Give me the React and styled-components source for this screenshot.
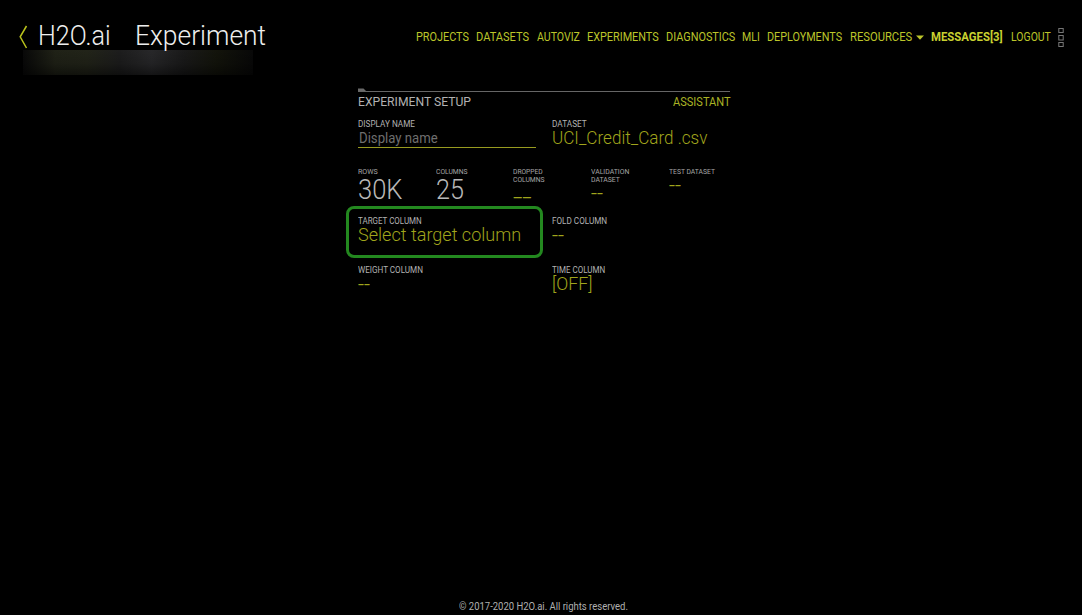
import React, { useLayoutEffect, useRef, useState } from "react";
import styled, { createGlobalStyle } from "styled-components";

const Global = createGlobalStyle`
  * { box-sizing: border-box; }
  body { margin: 0; background: #000; overflow: hidden; font-family: Roboto, "Liberation Sans", sans-serif; }
`;

const TextBox = styled.span`
  display: block;
  flex: none;
  width: ${(p) => p.$w}px;
  height: ${(p) => p.$lh}px;
  line-height: ${(p) => p.$lh}px;
  font-size: ${(p) => p.$size}px;
  font-weight: ${(p) => p.$weight || 400};
  color: ${(p) => p.$color};
  white-space: pre;
`;
const Stretch = styled.span`
  display: inline-block;
  vertical-align: top;
  transform-origin: 0 50%;
`;

/* Text condensed or widened horizontally to fill a given width. */
function Text({ w, lh, size, weight, color, children }) {
  const ref = useRef(null);
  const [scale, setScale] = useState(1);
  useLayoutEffect(() => {
    setScale(w / ref.current.offsetWidth);
  }, [w, children]);
  return (
    <TextBox $w={w} $lh={lh} $size={size} $weight={weight} $color={color}>
      <Stretch ref={ref} style={{ transform: `scaleX(${scale})` }}>{children}</Stretch>
    </TextBox>
  );
}

const Page = styled.div`
  display: flex;
  flex-direction: column;
  width: 1082px;
  height: 615px;
  background: #000;
`;
const Header = styled.header`
  display: flex;
  justify-content: space-between;
  height: 90px;
  padding: 21px 18px 0 19px;
`;
const Brand = styled.div`
  display: flex;
  flex-direction: column;
`;
const Title = styled.div`
  display: flex;
  height: 29px;
`;
const TitleText = styled.div`
  display: flex;
  gap: 24px;
  padding-top: 1px;
`;
const BackIcon = styled.svg`
  width: 9px;
  height: 24px;
  margin: 4px 10px 0 0;
`;
const UserBlur = styled.div`
  width: 230px;
  height: 25px;
  margin: 0 0 0 4px;
  background:
    linear-gradient(180deg, rgba(0, 0, 0, 0), rgba(0, 0, 0, 0.15) 55%, rgba(0, 0, 0, 0.5)),
    linear-gradient(90deg, #080808 0, #202217 14%, #222419 28%, #1d1d1d 42%, #28282a 56%, #1a1a1a 70%, #13140b 84%, #080808 100%);
`;
const Nav = styled.nav`
  display: flex;
  align-items: flex-start;
  padding-top: 6px;
  gap: 7.3px;
`;
const Resources = styled.div`
  display: flex;
  gap: 4px;
`;
const Caret = styled.svg`
  width: 8px;
  height: 5px;
  margin-top: 8px;
`;
const Dots = styled.svg`
  width: 6px;
  height: 20px;
`;
const Setup = styled.main`
  flex: 1;
  width: 373px;
  margin-left: 358px;
  margin-top: -2px;
`;
const Rule = styled.svg`
  display: block;
  width: 372px;
  height: 4px;
`;
const SetupHead = styled.div`
  display: flex;
  justify-content: space-between;
  width: 372px;
  height: 27px;
  padding-top: 2px;
`;
const Columns = styled.div`
  display: grid;
  grid-template-columns: 194px 179px;
  height: ${(p) => p.$h}px;
`;
const Field = styled.div`
  display: flex;
  flex-direction: column;
`;
const Input = styled.div`
  width: 178px;
  height: 19px;
  padding-left: 1px;
  border-bottom: 1px solid #989b20;
`;
const Stats = styled.div`
  display: grid;
  grid-template-columns: repeat(4, 77.7px) 62px;
  height: 38px;
`;
const Target = styled.div`
  width: 197px;
  height: 52px;
  margin: 0 0 0 -12px;
  padding: 7px 0 0 9px;
  border: 3px solid #23881f;
  border-radius: 8px;
`;
const FoldField = styled(Field)`
  padding-top: 10px;
`;
const Footer = styled.footer`
  display: flex;
  justify-content: center;
  height: 17px;
  padding-left: 5px;
`;

const LIME = "#bcc52a";
const OLIVE = "#a0a51c";
const GREY = "#b2b2b2";

const NavLink = ({ w, bold, children }) => (
  <Text w={w} lh={20} size={12.3} weight={bold ? 700 : 400} color={bold ? "#c8d030" : LIME}>{children}</Text>
);
const Label = ({ w, children }) => (
  <Text w={w} lh={10} size={8.6} color={GREY}>{children}</Text>
);
const SmallLabel = ({ w, children }) => (
  <Text w={w} lh={8} size={7.8} color="#a5a5a5">{children}</Text>
);
const Value = ({ w, children }) => (
  <Text w={w} lh={18} size={18.6} weight={300} color={OLIVE}>{children}</Text>
);
const Dashes = ({ w = 12, lh = 19 }) => (
  <Text w={w} lh={lh} size={16} weight={400} color={OLIVE}>--</Text>
);

export default function App() {
  return (
    <>
      <Global />
      <Page>
        <Header>
          <Brand>
            <Title>
              <BackIcon viewBox="0 0 9 24">
                <path d="M7.5 1 L1.2 11.8 L7.5 23" fill="none" stroke="#b9c21c" strokeWidth="1.5" />
              </BackIcon>
              <TitleText>
                <Text w={72.5} lh={29} size={27} weight={300} color="#eee">H2O.ai</Text>
                <Text w={131} lh={29} size={27} weight={300} color="#eee">Experiment</Text>
              </TitleText>
            </Title>
            <UserBlur />
          </Brand>
          <Nav>
            <NavLink w={53}>PROJECTS</NavLink>
            <NavLink w={53}>DATASETS</NavLink>
            <NavLink w={43}>AUTOVIZ</NavLink>
            <NavLink w={71.5}>EXPERIMENTS</NavLink>
            <NavLink w={69}>DIAGNOSTICS</NavLink>
            <NavLink w={18}>MLI</NavLink>
            <NavLink w={75.5}>DEPLOYMENTS</NavLink>
            <Resources>
              <NavLink w={62}>RESOURCES</NavLink>
              <Caret viewBox="0 0 8 5"><path d="M0 .5h8L4 4.7z" fill={LIME} /></Caret>
            </Resources>
            <NavLink w={72} bold>MESSAGES[3]</NavLink>
            <NavLink w={40}>LOGOUT</NavLink>
            <Dots viewBox="0 0 6 20">
              <g fill="none" stroke="#777" strokeWidth="1">
                <rect x=".8" y="1.5" width="4.4" height="4" />
                <rect x=".8" y="8.5" width="4.4" height="4.5" />
                <rect x=".8" y="15.5" width="4.4" height="4" />
              </g>
            </Dots>
          </Nav>
        </Header>

        <Setup>
          <Rule viewBox="0 0 372 4">
            <path d="M0 .5h5.5L8 3v.5H0z" fill="#6a6a6a" />
            <path d="M0 3.5h372" stroke="#666" />
          </Rule>
          <SetupHead>
            <Text w={113} lh={16} size={12.8} weight={400} color={GREY}>EXPERIMENT SETUP</Text>
            <Text w={57.5} lh={16} size={12.3} color="#aab324">ASSISTANT</Text>
          </SetupHead>
          <Columns $h={49}>
            <Field>
              <Label w={57}>DISPLAY NAME</Label>
              <Input><Text w={79} lh={18} size={14} color="#6e6e6e">Display name</Text></Input>
            </Field>
            <Field>
              <Label w={34.5}>DATASET</Label>
              <Value w={155.5}>UCI_Credit_Card .csv</Value>
            </Field>
          </Columns>
          <Stats>
            <Field>
              <SmallLabel w={20}>ROWS</SmallLabel>
              <Text w={44.5} lh={29} size={27} weight={300} color="#b8b8b8">30K</Text>
            </Field>
            <Field>
              <SmallLabel w={32}>COLUMNS</SmallLabel>
              <Text w={28} lh={29} size={27} weight={300} color="#b8b8b8">25</Text>
            </Field>
            <Field>
              <SmallLabel w={30}>DROPPED</SmallLabel>
              <SmallLabel w={32}>COLUMNS</SmallLabel>
              <Dashes w={19} lh={28} />
            </Field>
            <Field>
              <SmallLabel w={38}>VALIDATION</SmallLabel>
              <SmallLabel w={29}>DATASET</SmallLabel>
              <Dashes />
            </Field>
            <Field>
              <SmallLabel w={46}>TEST DATASET</SmallLabel>
              <Dashes />
            </Field>
          </Stats>
          <Columns $h={59}>
            <Target>
              <Label w={64}>TARGET COLUMN</Label>
              <Value w={163}>Select target column</Value>
            </Target>
            <FoldField>
              <Label w={55}>FOLD COLUMN</Label>
              <Dashes />
            </FoldField>
          </Columns>
          <Columns $h={40}>
            <Field>
              <Label w={65}>WEIGHT COLUMN</Label>
              <Dashes />
            </Field>
            <Field>
              <Label w={53}>TIME COLUMN</Label>
              <Value w={40}>[OFF]</Value>
            </Field>
          </Columns>
        </Setup>
        <Footer>
          <Text w={169} lh={17} size={10} color="#b0b0b0">© 2017-2020 H2O.ai. All rights reserved.</Text>
        </Footer>
      </Page>
    </>
  );
}
